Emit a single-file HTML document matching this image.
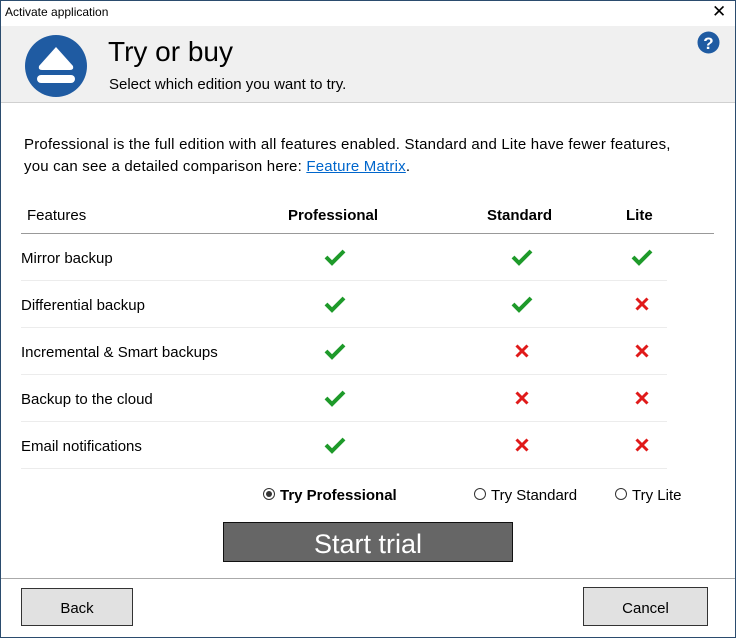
<!DOCTYPE html>
<html><head><style>
body{margin:0;width:736px;height:638px;overflow:hidden;font-family:"Liberation Sans",sans-serif;background:#fff;position:relative;color:#000}
.win{position:absolute;left:0;top:0;width:734px;height:636px;border:1px solid #2b4c6e}
.abs{position:absolute}
.t{font-size:15px;white-space:nowrap}
.sep{position:absolute;left:21px;width:646px;height:1px;background:#ececec}
</style></head><body>
<div class="win"></div>
<div class="abs" style="left:5px;top:5px;font-size:12px">Activate application</div>
<div class="abs" style="left:712px;top:2px;font-size:17px">✕</div>
<div class="abs" style="left:1px;top:26px;width:734px;height:76px;background:#f0f0f0;border-bottom:1px solid #d0d0d0"></div>
<svg class="abs" style="left:24px;top:34px" width="64" height="64" viewBox="0 0 64 64">
<circle cx="32" cy="32" r="31" fill="#1f5ba2"/>
<path d="M32 13 L49 32 Q50 36 46 36 H18 Q14 36 15 32 Z" fill="#fff"/>
<rect x="13" y="41" width="38" height="8" rx="4" fill="#fff"/>
</svg>
<div class="abs" style="left:108px;top:36px;font-size:28px">Try or buy</div>
<div class="abs t" style="left:109px;top:76px">Select which edition you want to try.</div>
<svg class="abs" style="left:697px;top:31px" width="23" height="23"><circle cx="11.5" cy="11.5" r="11" fill="#1f5ba2"/><text x="11.5" y="18" font-size="17" font-weight="bold" fill="#fff" text-anchor="middle" font-family="Liberation Sans">?</text></svg>
<div class="abs t" style="left:24px;top:134px;line-height:22px;letter-spacing:0.2px">Professional is the full edition with all features enabled. Standard and Lite have fewer features,<br>you can see a detailed comparison here: <span style="color:#0066cc;text-decoration:underline">Feature Matrix</span>.</div>
<div class="abs t" style="left:27px;top:207px">Features</div>
<div class="abs t" style="left:288px;top:207px;font-weight:bold">Professional</div>
<div class="abs t" style="left:487px;top:207px;font-weight:bold">Standard</div>
<div class="abs t" style="left:626px;top:207px;font-weight:bold">Lite</div>
<div class="abs" style="left:21px;top:233px;width:693px;height:1px;background:#999"></div>
<div id="rows"></div>
<script>
var names=["Mirror backup","Differential backup","Incremental &amp; Smart backups","Backup to the cloud","Email notifications"];
var m=[[1,1,1],[1,1,0],[1,0,0],[1,0,0],[1,0,0]];
var cx=[335,522,642],h="";
var ck='<svg width="24" height="20" viewBox="0 0 24 20"><path d="M3 10 L9 16 L21 4" stroke="#1e9a2a" stroke-width="4" fill="none"/></svg>';
var x='<svg width="16" height="16" viewBox="0 0 16 16"><path d="M2.5 2.5L13.5 13.5M13.5 2.5L2.5 13.5" stroke="#e01a1a" stroke-width="3"/></svg>';
for(var i=0;i<5;i++){var y=257+47*i;
h+='<div class="abs t" style="left:21px;top:'+(y-7)+'px">'+names[i]+'</div>';
for(var j=0;j<3;j++){h+=m[i][j]?'<div class="abs" style="left:'+(cx[j]-12)+'px;top:'+(y-10)+'px">'+ck+'</div>':'<div class="abs" style="left:'+(cx[j]-8)+'px;top:'+(y-8)+'px">'+x+'</div>';}
h+='<div class="sep" style="top:'+(y+23)+'px"></div>';}
document.getElementById('rows').innerHTML=h;
</script>
<div class="abs" style="left:263px;top:488px;width:10px;height:10px;border:1px solid #333;border-radius:50%"><div style="margin:2px;width:6px;height:6px;border-radius:50%;background:#333"></div></div>
<div class="abs t" style="left:280px;top:487px;font-weight:bold">Try Professional</div>
<div class="abs" style="left:474px;top:488px;width:10px;height:10px;border:1px solid #333;border-radius:50%"></div>
<div class="abs t" style="left:491px;top:487px">Try Standard</div>
<div class="abs" style="left:615px;top:488px;width:10px;height:10px;border:1px solid #333;border-radius:50%"></div>
<div class="abs t" style="left:632px;top:487px">Try Lite</div>
<div class="abs" style="left:223px;top:522px;width:288px;height:38px;background:#666;border:1px solid #111;color:#fff;font-size:27px;text-align:center;line-height:42px">Start trial</div>
<div class="abs" style="left:1px;top:578px;width:734px;height:1px;background:#aaa"></div>
<div class="abs t" style="left:21px;top:588px;width:110px;height:36px;background:#e1e1e1;border:1px solid #333;text-align:center;line-height:39px">Back</div>
<div class="abs t" style="left:583px;top:587px;width:123px;height:37px;background:#e1e1e1;border:1px solid #333;text-align:center;line-height:41px">Cancel</div>
</body></html>
